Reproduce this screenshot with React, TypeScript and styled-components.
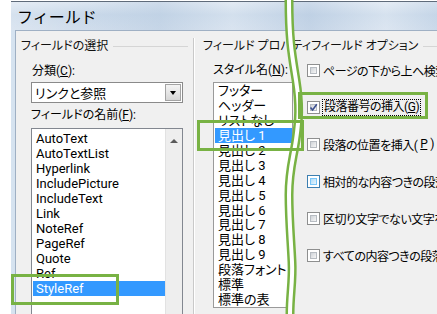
import { FC } from 'react';
import styled, { createGlobalStyle } from 'styled-components';

const Global = createGlobalStyle`
html, body{margin:0;padding:0;background:#fff;}
body{
  width:437px;height:314px;overflow:hidden;
  font-family:Roboto,"Noto Sans CJK JP",sans-serif;
  font-feature-settings:"palt" 1;
  color:#000;
}
`

const Page = styled.div`
position: relative;
width: 437px;
height: 314px;
overflow: hidden;
padding: 1px 0 0 11px;
box-sizing: border-box;
`

const Window = styled.div`
width: 426px;
height: 313px;
border-top: 1px solid #5f6b7a;
box-sizing: border-box;
display: flex;
flex-direction: column;
background: #d3e0ee;
`

const TitleBar = styled.div`
height: 28px;
flex: none;
display: flex;
align-items: center;
padding-left: 6px;
font: 400 16px Roboto,"Noto Sans CJK JP",sans-serif;
color: #000;
background:
  linear-gradient(90deg, rgba(255,255,255,0.25) 0%, rgba(255,255,255,0) 18%, rgba(180,200,222,0.35) 35%, rgba(255,255,255,0.2) 52%, rgba(170,192,218,0.3) 70%, rgba(255,255,255,0.25) 88%, rgba(190,208,228,0.3) 100%),
  linear-gradient(180deg, #dce6f1 0%, #c8d8e9 45%, #d0ddec 100%);
`

const Frame = styled.div`
flex: 1;
display: flex;
padding-left: 4px;
min-height: 0;
background: #d6e3f0;
`

const Body = styled.div`
flex: 1;
display: flex;
background: #f0f0f0;
border-left: 1px solid #9fb0c4;
border-top: 1px solid #9fb0c4;
padding-top: 7px;
min-height: 0;
`

const LeftPanel = styled.div`
width: 172px;
flex: none;
padding-left: 5px;
display: flex;
flex-direction: column;
`

const Divider = styled.div`
width: 1px;
flex: none;
background: #c9c9c9;
border-right: 1px solid #fff;
`

const RightPanel = styled.div`
flex: 1;
padding-left: 8px;
display: flex;
flex-direction: column;
min-width: 0;
`

const GroupHeader = styled.div<{ $end?: number }>`
height: 16px;
display: flex;
align-items: center;
gap: 5px;
font-size: 12px;
line-height: 16px;
white-space: nowrap;
color: #111;
&::after{
  content: "";
  flex: 1;
  height: 1px;
  background: #d5d5d5;
  margin-right: ${p => p.$end || 0}px;
}
`

const Label = styled.div<{ $top: number; $indent: number }>`
margin-top: ${p => p.$top}px;
margin-left: ${p => p.$indent}px;
font-size: 12px;
line-height: 16px;
white-space: nowrap;
`

const Combo = styled.div`
margin: 3px 0 0 10px;
width: 152px;
height: 21px;
box-sizing: border-box;
border: 1px solid #8a8a8a;
background: #fff;
display: flex;
align-items: center;
padding-left: 3px;
font-size: 13px;
`

const ComboText = styled.span`
flex: 1;
`

const DropButton = styled.div`
width: 16px;
height: 17px;
margin-right: 1px;
box-sizing: border-box;
border: 1px solid #a3a3a3;
background: linear-gradient(180deg, #f4f4f4 0%, #e6e6e6 50%, #d6d6d6 100%);
display: flex;
align-items: center;
justify-content: center;
&::before{
  content: "";
  border-left: 3.5px solid transparent;
  border-right: 3.5px solid transparent;
  border-top: 4px solid #000;
}
`

const FieldList = styled.div`
margin: 5px 0 0 10px;
width: 152px;
flex: 1;
box-sizing: border-box;
border: 1px solid #828790;
border-bottom: none;
background: #fff;
display: flex;
min-height: 0;
`

const Items = styled.div<{ $pad: number }>`
flex: 1;
padding-top: ${p => p.$pad}px;
padding-left: 1px;
display: flex;
flex-direction: column;
min-width: 0;
`

const Item = styled.div<{ $selected?: boolean }>`
height: 15px;
line-height: 15px;
font-size: 13px;
padding-left: 3px;
white-space: nowrap;
overflow: hidden;
background: ${p => (p.$selected ? '#3399ff' : 'transparent')};
color: ${p => (p.$selected ? '#fff' : '#000')};
`

const ScrollBar = styled.div`
width: 17px;
flex: none;
background: #eeeeee;
border-left: 1px solid #e2e2e2;
display: flex;
justify-content: center;
padding-top: 10px;
box-sizing: border-box;
&::before{
  content: "";
  width: 0;
  height: 0;
  border-left: 4px solid transparent;
  border-right: 4px solid transparent;
  border-bottom: 4px solid #5a5a5a;
}
`

const Split = styled.div`
display: flex;
gap: 14px;
margin-top: 8px;
margin-left: 10px;
flex: 1;
min-height: 0;
`

const StyleColumn = styled.div`
width: 80px;
flex: none;
display: flex;
flex-direction: column;
`

const StyleList = styled.div`
margin-top: 4px;
height: 226px;
box-sizing: border-box;
border: 1px solid #9a9a9a;
background: #fff;
display: flex;
`

const Options = styled.div`
display: flex;
flex-direction: column;
gap: 21px;
min-width: 0;
`

const OptionRow = styled.div`
height: 16px;
display: flex;
align-items: center;
gap: 3px;
font-size: 12px;
letter-spacing: -0.5px;
white-space: nowrap;
`

const Box = styled.span<{ $hot?: boolean }>`
width: 13px;
height: 13px;
flex: none;
box-sizing: border-box;
border: 1px solid ${p => (p.$hot ? '#3c7fb1' : '#8e8f8f')};
background: #fff;
position: relative;
&::after{
  content: "";
  position: absolute;
  inset: 2px;
  border: 1px solid ${p => (p.$hot ? '#79c6f9' : '#b7bcc2')};
  background: ${p => (p.$hot
    ? 'linear-gradient(135deg, #b1dcf7 0%, #e6f4fd 100%)'
    : 'linear-gradient(135deg, #cfd3d8 0%, #f6f6f6 100%)')};
}
svg{position:absolute;left:1px;top:1px;z-index:1;}
`

const Focus = styled.span`
outline: 1px dotted #000;
padding: 0 1px;
line-height: 15px;
`

const Mark = styled.div<{ $x: number; $y: number; $w: number; $h: number }>`
position: absolute;
left: ${p => p.$x}px;
top: ${p => p.$y}px;
width: ${p => p.$w}px;
height: ${p => p.$h}px;
box-sizing: border-box;
border: 3px solid #78b244;
pointer-events: none;
`

const Wave = styled.svg`
position: absolute;
left: 0;
top: 0;
pointer-events: none;
`

const fields = ['AutoText', 'AutoTextList', 'Hyperlink', 'IncludePicture', 'IncludeText', 'Link', 'NoteRef', 'PageRef', 'Quote', 'Ref', 'StyleRef']
const styles = ['フッター', 'ヘッダー', 'リストなし', '見出し 1', '見出し 2', '見出し 3', '見出し 4', '見出し 5', '見出し 6', '見出し 7', '見出し 8', '見出し 9', '段落フォント', '標準', '標準の表']

const Check: FC = () => (
  <svg width="9" height="9" viewBox="0 0 9 9">
    <path d="M1.5 4.5 L3.6 7 L7.8 1.3" fill="none" stroke="#3b4f8f" strokeWidth="1.6" />
  </svg>
)

const wavePath = 'M289,0 C289,40 292,55 296,80 S299,120 296,140 C293,160 289,170 289,195 C289,220 291,240 292,262 C293,280 290,295 290,314'

export default function App() {
  return (
    <>
      <Global />
      <Page>
        <Window>
          <TitleBar>フィールド</TitleBar>
          <Frame>
            <Body>
              <LeftPanel>
                <GroupHeader $end={5}>フィールドの選択</GroupHeader>
                <Label $top={9} $indent={11}>分類(<u>C</u>):</Label>
                <Combo>
                  <ComboText>リンクと参照</ComboText>
                  <DropButton />
                </Combo>
                <Label $top={4} $indent={10}>フィールドの名前(<u>F</u>):</Label>
                <FieldList>
                  <Items $pad={2}>
                    {fields.map(f => (
                      <Item key={f} $selected={f === 'StyleRef'}>{f}</Item>
                    ))}
                  </Items>
                  <ScrollBar />
                </FieldList>
              </LeftPanel>
              <Divider />
              <RightPanel>
                <GroupHeader>フィールド プロパティフィールド オプション</GroupHeader>
                <Split>
                  <StyleColumn>
                    <Label $top={0} $indent={0}>スタイル名(<u>N</u>):</Label>
                    <StyleList>
                      <Items $pad={0}>
                        {styles.map(s => (
                          <Item key={s} $selected={s === '見出し 1'}>{s}</Item>
                        ))}
                      </Items>
                    </StyleList>
                  </StyleColumn>
                  <Options>
                    <OptionRow><Box />ページの下から上へ検索</OptionRow>
                    <OptionRow><Box><Check /></Box><Focus>段落番号の挿入(<u>G</u>)</Focus></OptionRow>
                    <OptionRow><Box />段落の位置を挿入(<u>P</u>)</OptionRow>
                    <OptionRow><Box $hot />相対的な内容つきの段落</OptionRow>
                    <OptionRow><Box />区切り文字でない文字を</OptionRow>
                    <OptionRow><Box />すべての内容つきの段落</OptionRow>
                  </Options>
                </Split>
              </RightPanel>
            </Body>
          </Frame>
        </Window>
        <Wave width="437" height="314" viewBox="0 0 437 314">
          <path d={wavePath} fill="none" stroke="#78b244" strokeWidth="9" />
          <path d={wavePath} fill="none" stroke="#fff" strokeWidth="4" />
        </Wave>
        <Mark $x={11} $y={274} $w={108} $h={31} />
        <Mark $x={197} $y={120} $w={107} $h={31} />
        <Mark $x={298} $y={92} $w={130} $h={27} />
      </Page>
    </>
  )
}
